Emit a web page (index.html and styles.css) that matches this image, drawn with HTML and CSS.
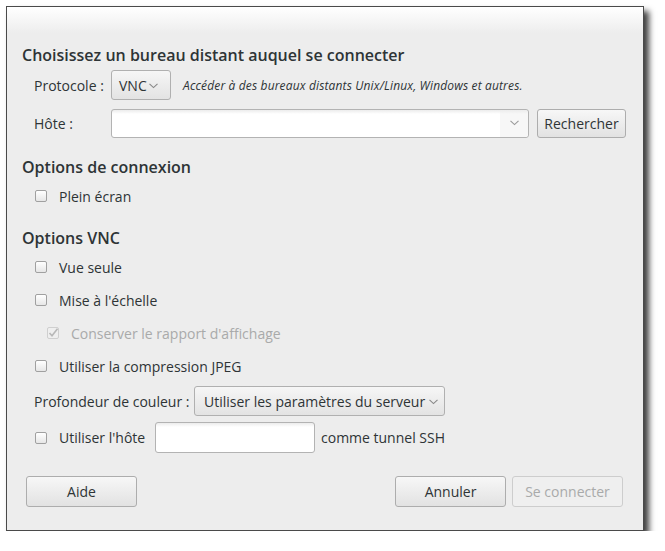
FILE: index.html
```html
<!DOCTYPE html>
<html lang="fr">
<head>
<meta charset="utf-8">
<title>Connexion</title>
<link rel="stylesheet" href="styles.css">
</head>
<body>
<div class="window">
  <div class="content">
    <div class="heading h-first">Choisissez un bureau distant auquel se connecter</div>

    <div class="row proto-row">
      <span class="label">Protocole :</span>
      <span class="combo combo-vnc">VNC<svg class="chev" width="9" height="6" viewBox="0 0 9 6"><path d="M0.5 0.8 L4.5 4.6 L8.5 0.8" fill="none" stroke="#888" stroke-width="1.1"/></svg></span>
      <span class="desc">Accéder à des bureaux distants Unix/Linux, Windows et autres.</span>
    </div>

    <div class="row host-row">
      <span class="label">Hôte :</span>
      <span class="entry host-entry"><span class="entry-btn"><svg class="chev" width="9" height="6" viewBox="0 0 9 6"><path d="M0.5 0.8 L4.5 4.6 L8.5 0.8" fill="none" stroke="#999" stroke-width="1.1"/></svg></span></span>
      <span class="button search-btn">Rechercher</span>
    </div>

    <div class="heading h-conn">Options de connexion</div>
    <div class="check-row r-full"><span class="check"></span><span>Plein écran</span></div>

    <div class="heading h-vnc">Options VNC</div>
    <div class="check-row r-view"><span class="check"></span><span>Vue seule</span></div>
    <div class="check-row r-gap"><span class="check"></span><span>Mise à l'échelle</span></div>
    <div class="check-row r-gap sub disabled"><span class="check checked"><svg width="12" height="12" viewBox="0 0 12 12"><path d="M2.5 6 L5 8.8 L10.5 1.8" fill="none" stroke="#b8b8b8" stroke-width="1.6"/></svg></span><span>Conserver le rapport d'affichage</span></div>
    <div class="check-row r-gap"><span class="check"></span><span>Utiliser la compression JPEG</span></div>

    <div class="row depth-row">
      <span class="label">Profondeur de couleur :</span>
      <span class="combo combo-depth">Utiliser les paramètres du serveur<svg class="chev" width="9" height="6" viewBox="0 0 9 6"><path d="M0.5 0.8 L4.5 4.6 L8.5 0.8" fill="none" stroke="#888" stroke-width="1.1"/></svg></span>
    </div>

    <div class="row ssh-row">
      <span class="check"></span>
      <span class="ssh-label">Utiliser l'hôte</span>
      <span class="entry ssh-entry"></span>
      <span class="ssh-after">comme tunnel SSH</span>
    </div>
  </div>

  <div class="actions">
    <span class="button act">Aide</span>
    <span class="spacer"></span>
    <span class="button act">Annuler</span>
    <span class="button act btn-disabled">Se connecter</span>
  </div>
</div>
</body>
</html>
```
FILE: styles.css
```css
html, body {
  margin: 0;
  padding: 0;
  background: #ffffff;
}
body {
  font-family: "Open Sans", "DejaVu Sans", sans-serif;
  font-size: 14px;
  color: #2e3436;
}
.window {
  margin: 6px 0 0 6px;
  width: 636px;
  height: 523px;
  border: 1px solid #4a4a4a;
  background: linear-gradient(to bottom, #ffffff 0px, #ededed 26px, #ededed 100%);
  box-shadow: 5px 5px 6px rgba(0, 0, 0, 0.75);
  display: flex;
  flex-direction: column;
}
.content {
  padding: 38px 16px 0 15px;
  display: flex;
  flex-direction: column;
}
.heading {
  height: 20px;
  line-height: 20px;
  font-size: 16px;
  font-weight: 600;
  color: #2e3436;
  white-space: nowrap;
}
.h-conn { margin-top: 19px; }
.h-vnc { margin-top: 22px; }
.row {
  display: flex;
  align-items: center;
  height: 30px;
  white-space: nowrap;
}
.proto-row { margin-top: 5px; padding-left: 12px; }
.host-row { margin-top: 8px; padding-left: 12px; }
.label {
  width: 77px;
  flex: none;
}
.combo {
  display: flex;
  align-items: center;
  box-sizing: border-box;
  height: 30px;
  border: 1px solid #b0b0b0;
  border-radius: 3px;
  background: linear-gradient(to bottom, #f6f6f6, #e3e3e3);
  padding: 0 5px 0 7px;
  flex: none;
}
.combo .chev { margin-left: 2px; margin-top: 1px; }
.combo-vnc { width: 60px; }
.desc {
  margin-left: 12px;
  font-size: 12px;
  font-style: italic;
  letter-spacing: 0.15px;
}
.entry {
  box-sizing: border-box;
  border: 1px solid #b3b3b3;
  border-radius: 3px;
  background: linear-gradient(to bottom, #ececec 0px, #ffffff 4px, #ffffff 100%);
  flex: none;
}
.host-entry {
  width: 418px;
  height: 29px;
  display: flex;
  justify-content: flex-end;
}
.entry-btn {
  width: 28px;
  display: flex;
  align-items: center;
  justify-content: center;
  background: linear-gradient(to bottom, #ececec 0px, #f7f7f7 4px, #f7f7f7 100%);
  border-radius: 0 3px 3px 0;
}
.button {
  box-sizing: border-box;
  display: flex;
  align-items: center;
  justify-content: center;
  height: 30px;
  border: 1px solid #adadad;
  border-radius: 3px;
  background: linear-gradient(to bottom, #f7f7f7, #e2e2e2);
  color: #2e3436;
  flex: none;
}
.search-btn {
  margin-left: 8px;
  width: 89px;
  height: 29px;
}
.check-row {
  display: flex;
  align-items: center;
  height: 20px;
  padding-left: 13px;
}
.check {
  box-sizing: border-box;
  width: 12px;
  height: 12px;
  flex: none;
  border: 1px solid #a0a0a0;
  border-radius: 2px;
  background: linear-gradient(to bottom, #ffffff, #e6e6e6);
  margin-right: 12px;
  display: flex;
}
.check svg { margin: -1px; }
.r-full { margin-top: 9px; }
.r-view { margin-top: 9px; }
.r-gap { margin-top: 13px; }
.sub { padding-left: 25px; }
.disabled { color: #a9aaaa; }
.disabled .check {
  border-color: #cfcfcf;
  background: #efefef;
}
.depth-row { margin-top: 10px; padding-left: 12px; }
.depth-row .label { width: 160px; }
.combo-depth { width: 251px; justify-content: space-between; padding-left: 9px; padding-right: 6px; }
.ssh-row { margin-top: 6px; padding-left: 13px; height: 31px; }
.ssh-label { width: 96px; flex: none; }
.ssh-entry { width: 160px; height: 31px; }
.ssh-after { margin-left: 6px; }
.actions {
  display: flex;
  align-items: center;
  padding: 0 20px 0 19px;
  margin-top: 23px;
}
.spacer { flex: 1; }
.act { width: 111px; height: 31px; }
.act + .act { margin-left: 6px; }
.btn-disabled {
  background: #efefef;
  border-color: #cdcdcd;
  color: #a9aaaa;
}
```
